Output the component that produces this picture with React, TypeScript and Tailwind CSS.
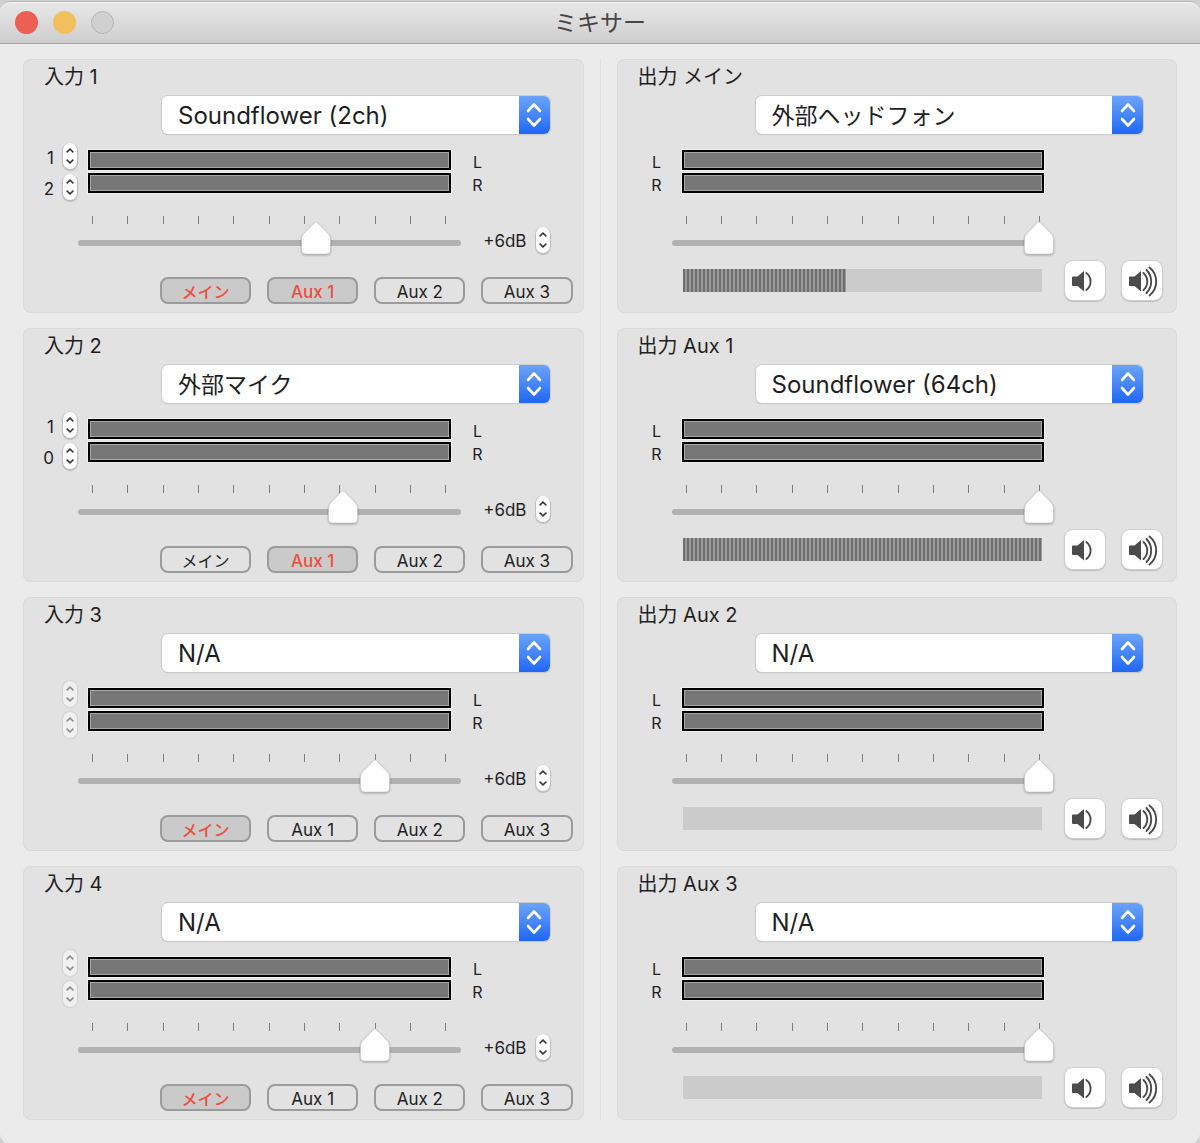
import { useState } from 'react';

type Route = 'メイン' | 'Aux 1' | 'Aux 2' | 'Aux 3';

interface InputChannel {
  name: string;
  device: string;
  channels: [string, string] | null;
  gain: number;
  routes: Route[];
}

interface OutputChannel {
  name: string;
  device: string;
  gain: number;
  level: number;
}

const ROUTES: Route[] = ['メイン', 'Aux 1', 'Aux 2', 'Aux 3'];
const DEVICES = ['N/A', 'Soundflower (2ch)', 'Soundflower (64ch)', '外部マイク', '外部ヘッドフォン'];
const TICKS = Array.from({ length: 11 }, (_, i) => i);

const inputs: InputChannel[] = [
  { name: '入力 1', device: 'Soundflower (2ch)', channels: ['1', '2'], gain: 63.2, routes: ['メイン', 'Aux 1'] },
  { name: '入力 2', device: '外部マイク', channels: ['1', '0'], gain: 70.8, routes: ['Aux 1'] },
  { name: '入力 3', device: 'N/A', channels: null, gain: 80, routes: ['メイン'] },
  { name: '入力 4', device: 'N/A', channels: null, gain: 80, routes: ['メイン'] },
];

const outputs: OutputChannel[] = [
  { name: '出力 メイン', device: '外部ヘッドフォン', gain: 100, level: 45.4 },
  { name: '出力 Aux 1', device: 'Soundflower (64ch)', gain: 100, level: 100 },
  { name: '出力 Aux 2', device: 'N/A', gain: 100, level: 0 },
  { name: '出力 Aux 3', device: 'N/A', gain: 100, level: 0 },
];

function Panel({ name, children }: { name: string; children: React.ReactNode }) {
  return (
    <section
      aria-label={name}
      className="rounded-lg bg-[#e2e2e2] pt-1.5 shadow-[inset_0_0_0_1px_#dadada]"
    >
      <h2 className="pl-[21px] text-xl leading-6">{name}</h2>
      {children}
    </section>
  );
}

function DeviceSelect({ label, initial }: { label: string; initial: string }) {
  const [device, setDevice] = useState(initial);
  // kanji and kana look larger than latin at the same size
  const textSize = device.startsWith('外部') ? 'text-[23px]' : 'text-2xl';

  return (
    <div className="relative mt-[7px] mr-[34px] ml-[139px] h-[38px] rounded-md shadow-[0_0_0_1px_#cbcbcb,0_1px_1px_0_#a8a8a8]">
      <select
        aria-label={label}
        value={device}
        onChange={(e) => setDevice(e.target.value)}
        className={`h-full w-full appearance-none rounded-md bg-white pt-0.5 pl-4 ${textSize}`}
      >
        {DEVICES.map((d) => (
          <option key={d}>{d}</option>
        ))}
      </select>
      <span className="pointer-events-none absolute inset-y-0 right-0 flex w-[31px] items-center justify-center rounded-r-md bg-linear-to-b from-[#6ba3f8] to-[#1f66f5]">
        <svg width="16" height="26" viewBox="0 0 16 26" fill="none" stroke="white" strokeWidth="2.6" strokeLinecap="round" strokeLinejoin="round">
          <path d="M2 9 8 2.5 14 9M2 17l6 6.5 6-6.5" />
        </svg>
      </span>
    </div>
  );
}

function Stepper({ label, disabled = false }: { label: string; disabled?: boolean }) {
  const pill = disabled
    ? 'bg-[#f0f0f0] text-[#8e8e8e] shadow-[0_0_1px_1px_#d2d2d2]'
    : 'bg-white text-[#3a3a3a] shadow-[0_1px_1px_1px_#bdbdbd]';

  return (
    <span className={`flex h-[26px] w-3.5 shrink-0 flex-col rounded-full ${pill}`}>
      <button aria-label={`${label} +`} disabled={disabled} className="flex flex-1 items-end justify-center pb-[3px]">
        <svg width="8" height="5" viewBox="0 0 8 5" fill="none" stroke="currentColor" strokeWidth="1.6">
          <path d="M.6 4.4 4 1.2l3.4 3.2" />
        </svg>
      </button>
      <button aria-label={`${label} -`} disabled={disabled} className="flex flex-1 items-start justify-center pt-[3px]">
        <svg width="8" height="5" viewBox="0 0 8 5" fill="none" stroke="currentColor" strokeWidth="1.6">
          <path d="M.6.6 4 3.8 7.4.6" />
        </svg>
      </button>
    </span>
  );
}

function Meters() {
  return (
    <div className="flex flex-1 flex-col gap-[3px] pt-[7px]">
      <div className="h-5 border-2 border-black bg-[#777] shadow-[inset_0_0_0_1px_#a6a6a6,0_0_0_1px_#f0f0f0]" />
      <div className="h-5 border-2 border-black bg-[#777] shadow-[inset_0_0_0_1px_#a6a6a6,0_0_0_1px_#f0f0f0]" />
    </div>
  );
}

function LeftRight() {
  return (
    <div className="flex w-3 flex-col pt-2 text-center text-base leading-[23px]">
      <span>L</span>
      <span>R</span>
    </div>
  );
}

function Fader({ label, initial }: { label: string; initial: number }) {
  const [value, setValue] = useState(initial);

  return (
    <div className="relative flex-1">
      <div className="mx-3.5 flex justify-between">
        {TICKS.map((t) => (
          <span key={t} className="h-2 w-px bg-[#7d7d7d]" />
        ))}
      </div>
      <input
        type="range"
        aria-label={label}
        min={0}
        max={100}
        step={0.1}
        value={value}
        onChange={(e) => setValue(Number(e.target.value))}
        className="mt-4 block h-1.5 w-full appearance-none rounded-full bg-[#b1b1b1] [&::-webkit-slider-thumb]:h-8 [&::-webkit-slider-thumb]:w-[30px] [&::-webkit-slider-thumb]:appearance-none [&::-webkit-slider-thumb]:bg-transparent"
      />
      <div className="pointer-events-none absolute top-1 right-[31px] left-0">
        <svg
          width="32"
          height="36"
          viewBox="0 0 32 36"
          className="relative drop-shadow-[0_1px_1px_#0000004d]"
          style={{ left: `${value}%` }}
        >
          <path
            d="M14.8 2.4Q16 1.2 17.2 2.4L28.5 14Q30.5 16.2 30.5 19V30Q30.5 34 26.5 34H5.5Q1.5 34 1.5 30V19Q1.5 16.2 3.5 14Z"
            fill="white"
            stroke="#c4c4c4"
            strokeWidth=".6"
          />
        </svg>
      </div>
    </div>
  );
}

function InputPanel({ channel }: { channel: InputChannel }) {
  const [routes, setRoutes] = useState(channel.routes);

  const toggle = (route: Route) => {
    setRoutes(routes.includes(route) ? routes.filter((r) => r !== route) : [...routes, route]);
  };

  const getRouteClass = (route: Route) => {
    const baseClass = 'h-[27px] rounded-lg border-2 border-[#9b9b9b] pt-[3px] leading-5';
    const textClass = route === 'メイン' ? 'text-base' : 'text-[17px]';
    if (routes.includes(route)) {
      return `${baseClass} ${textClass} bg-[#cacaca] font-medium text-[#f04e3e]`;
    }
    return `${baseClass} ${textClass}`;
  };

  return (
    <Panel name={channel.name}>
      <DeviceSelect label={channel.name} initial={channel.device} />
      <div className="mt-[9px] flex">
        <div className="flex w-[65px] flex-col gap-[5px] pr-[11px]">
          {[0, 1].map((i) => (
            <div key={i} className="flex h-[26px] items-start justify-end gap-[9px] text-[17px] leading-[30px]">
              {channel.channels && <span>{channel.channels[i]}</span>}
              <Stepper label={`${channel.name} ch ${i + 1}`} disabled={!channel.channels} />
            </div>
          ))}
        </div>
        <Meters />
        <div className="w-[133px] pl-[21px]">
          <LeftRight />
        </div>
      </div>
      <div className="mt-4 flex h-[39px] pr-[34px] pl-[55px]">
        <Fader label={`${channel.name} gain`} initial={channel.gain} />
        <div className="flex w-[89px] items-start justify-end gap-[9px] pt-[11px] text-[17px] leading-7">
          <span>+6dB</span>
          <Stepper label={`${channel.name} dB`} />
        </div>
      </div>
      <div className="mt-[22px] grid grid-cols-4 gap-4 pr-[11px] pb-[9px] pl-[137px]">
        {ROUTES.map((route) => (
          <button
            key={route}
            aria-pressed={routes.includes(route)}
            onClick={() => toggle(route)}
            className={getRouteClass(route)}
          >
            {route}
          </button>
        ))}
      </div>
    </Panel>
  );
}

function Speaker({ waves }: { waves: string[] }) {
  return (
    <svg width="30" height="32" viewBox="0 0 30 32" fill="none" stroke="#4b4b4b" strokeWidth="1.9" strokeLinecap="round">
      <path d="M0 12.5Q0 11.5 1 11.5H5.5L12 6V26.5L5.5 21H1Q0 21 0 20Z" fill="#4b4b4b" stroke="none" />
      {waves.map((d) => (
        <path key={d} d={d} />
      ))}
    </svg>
  );
}

function OutputPanel({ channel }: { channel: OutputChannel }) {
  const [level, setLevel] = useState(channel.level);
  const buttonClass =
    'flex h-[39px] w-10 shrink-0 items-center rounded-lg bg-white pl-[7px] shadow-[0_0_0_1px_#cfcfcf,0_1px_1px_1px_#bdbdbd]';

  return (
    <Panel name={channel.name}>
      <DeviceSelect label={channel.name} initial={channel.device} />
      <div className="mt-[9px] flex h-[57px] pr-[133px]">
        <div className="w-[65px] pl-[34px]">
          <LeftRight />
        </div>
        <Meters />
      </div>
      <div className="mt-4 flex h-[39px] pr-[123px] pl-[55px]">
        <Fader label={`${channel.name} gain`} initial={channel.gain} />
      </div>
      <div className="mt-1.5 flex items-start gap-[17px] pr-[15px] pb-[13px] pl-[66px]">
        <div
          role="meter"
          aria-label={`${channel.name} volume`}
          aria-valuenow={level}
          className="mt-2 mr-1.5 h-[23px] flex-1 bg-[#cbcbcb]"
        >
          <div
            className="h-full bg-[repeating-linear-gradient(90deg,#6e6e6e_0_2px,#9a9a9a_2px_4px)]"
            style={{ width: `${level}%` }}
          />
        </div>
        <button
          aria-label={`${channel.name} volume down`}
          onClick={() => setLevel(Math.max(0, level - 5))}
          className={buttonClass}
        >
          <Speaker waves={['M14.3 8A10.6 10.6 0 0 1 14.3 25']} />
        </button>
        <button
          aria-label={`${channel.name} volume up`}
          onClick={() => setLevel(Math.min(100, level + 5))}
          className={buttonClass}
        >
          <Speaker
            waves={[
              'M14.5 8A11.5 11.5 0 0 1 14.5 25',
              'M17.5 5A16.5 16.5 0 0 1 17.5 28',
              'M20.5 2.5A18 18 0 0 1 20.5 30.5',
            ]}
          />
        </button>
      </div>
    </Panel>
  );
}

export default function App() {
  return (
    <div className="min-h-screen bg-[#cfcfcf] pt-px font-['Inter','Noto_Sans_CJK_JP',sans-serif] text-[#1f1f1f]">
      <main className="rounded-[10px] bg-[#ebebeb] pb-6">
        <header className="grid h-[43px] grid-cols-[1fr_auto_1fr] items-center rounded-t-[10px] border-t border-b border-t-[#b5b5b5] border-b-[#a5a5a5] bg-linear-to-b from-[#e8e8e8] to-[#cecece] px-[15px] shadow-[inset_0_1px_0_#f5f5f5]">
          <div className="flex gap-[15px]">
            <button aria-label="閉じる" className="size-[23px] rounded-full bg-[#ec5f52]" />
            <button aria-label="しまう" className="size-[23px] rounded-full bg-[#f1bf5d]" />
            <button aria-label="拡大" disabled className="size-[23px] rounded-full border border-[#b4b4b4] bg-[#d0d0d0]" />
          </div>
          <h1 className="text-[23px] leading-8 text-[#454545]">ミキサー</h1>
        </header>
        <div className="grid grid-cols-[1fr_1px_1fr] gap-x-4 px-[23px] pt-[15px]">
          <div className="flex flex-col gap-[15px]">
            {inputs.map((channel) => (
              <InputPanel key={channel.name} channel={channel} />
            ))}
          </div>
          <div className="bg-[#e0e0e0]" />
          <div className="flex flex-col gap-[15px]">
            {outputs.map((channel) => (
              <OutputPanel key={channel.name} channel={channel} />
            ))}
          </div>
        </div>
      </main>
    </div>
  );
}
